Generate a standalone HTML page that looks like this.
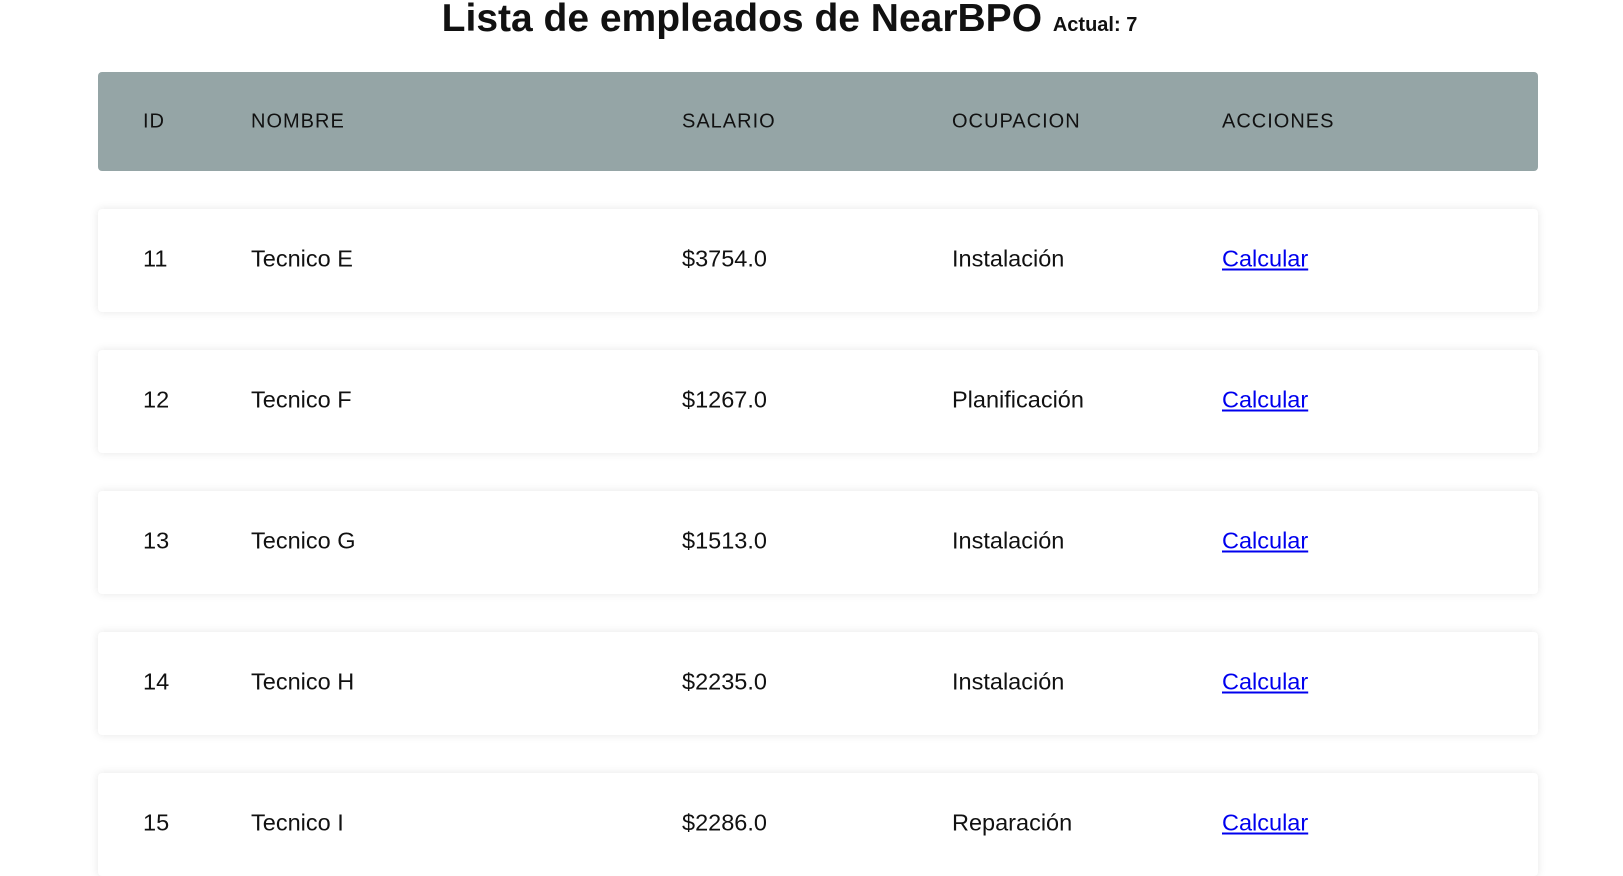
<!DOCTYPE html>
<html><head><meta charset="utf-8"><style>
body{margin:0;background:#fff;font-family:"Liberation Sans",Arial,sans-serif;width:1623px;height:865px;overflow:hidden;position:relative;color:#111}
h1{position:absolute;top:-3px;left:-22px;width:1623px;text-align:center;margin:0;font-size:39px;font-weight:bold;white-space:nowrap}
h1 span{font-size:20px}
.hdr{position:absolute;left:98px;width:1440px;top:72px;height:99px;background:#95a5a6;border-radius:4px}
.row{position:absolute;left:98px;width:1440px;height:103px;background:#fff;border-radius:4px;box-shadow:0 0 9px rgba(0,0,0,0.1)}
.c{position:absolute;top:50%;transform:translateY(-50%);white-space:nowrap}
.hdr .c{font-size:20px;letter-spacing:1px;color:#111}
.row .c{font-size:23.5px;margin-top:-2px}
a{color:#0000ee;text-decoration:underline}
</style></head><body>
<h1>Lista de empleados de NearBPO <span>Actual: 7</span></h1>
<div class="hdr"><div class="c" style="left:45px">ID</div><div class="c" style="left:153px">NOMBRE</div><div class="c" style="left:584px">SALARIO</div><div class="c" style="left:854px">OCUPACION</div><div class="c" style="left:1124px">ACCIONES</div></div>
<div class="row" style="top:209px"><div class="c" style="left:45px">11</div><div class="c" style="left:153px">Tecnico E</div><div class="c" style="left:584px">$3754.0</div><div class="c" style="left:854px">Instalación</div><div class="c" style="left:1124px"><a>Calcular</a></div></div>
<div class="row" style="top:350px"><div class="c" style="left:45px">12</div><div class="c" style="left:153px">Tecnico F</div><div class="c" style="left:584px">$1267.0</div><div class="c" style="left:854px">Planificación</div><div class="c" style="left:1124px"><a>Calcular</a></div></div>
<div class="row" style="top:491px"><div class="c" style="left:45px">13</div><div class="c" style="left:153px">Tecnico G</div><div class="c" style="left:584px">$1513.0</div><div class="c" style="left:854px">Instalación</div><div class="c" style="left:1124px"><a>Calcular</a></div></div>
<div class="row" style="top:632px"><div class="c" style="left:45px">14</div><div class="c" style="left:153px">Tecnico H</div><div class="c" style="left:584px">$2235.0</div><div class="c" style="left:854px">Instalación</div><div class="c" style="left:1124px"><a>Calcular</a></div></div>
<div class="row" style="top:773px"><div class="c" style="left:45px">15</div><div class="c" style="left:153px">Tecnico I</div><div class="c" style="left:584px">$2286.0</div><div class="c" style="left:854px">Reparación</div><div class="c" style="left:1124px"><a>Calcular</a></div></div>
</body></html>
